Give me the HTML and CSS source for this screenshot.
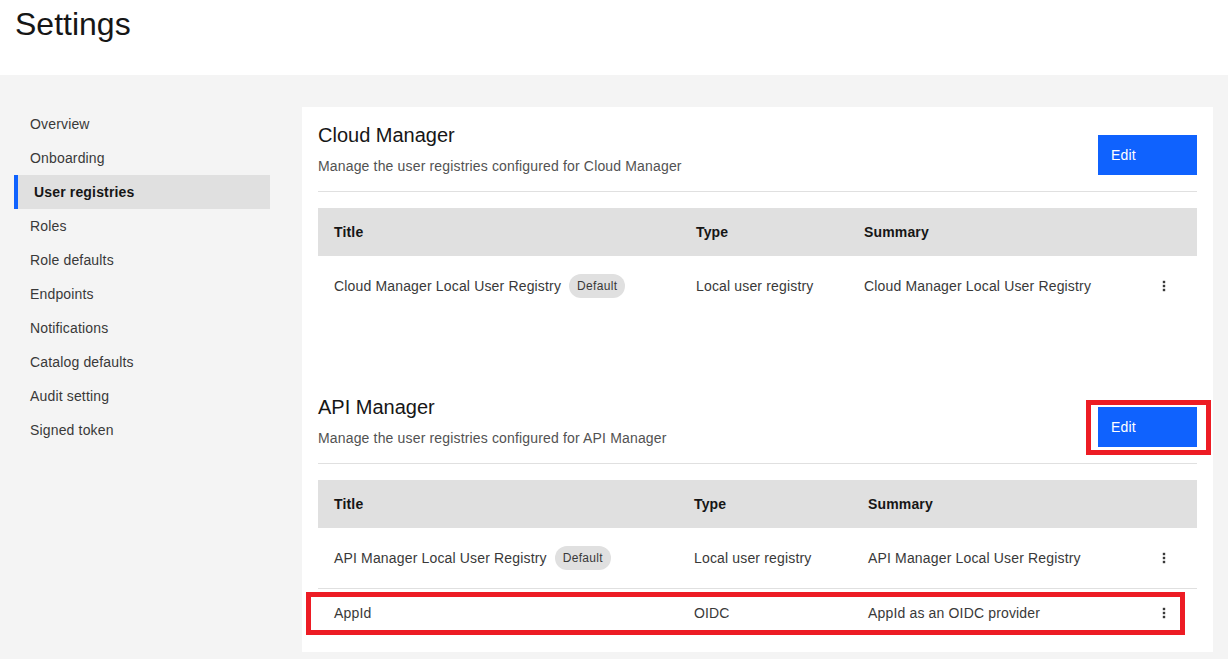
FILE: index.html
```html
<!DOCTYPE html>
<html lang="en">
<head>
<meta charset="utf-8">
<title>Settings</title>
<link rel="stylesheet" href="styles.css">
</head>
<body>
<header class="page-header">
  <h1 class="page-title">Settings</h1>
</header>
<div class="layout">
  <nav class="side-nav">
    <a class="nav-item">Overview</a>
    <a class="nav-item">Onboarding</a>
    <a class="nav-item active">User registries</a>
    <a class="nav-item">Roles</a>
    <a class="nav-item">Role defaults</a>
    <a class="nav-item">Endpoints</a>
    <a class="nav-item">Notifications</a>
    <a class="nav-item">Catalog defaults</a>
    <a class="nav-item">Audit setting</a>
    <a class="nav-item">Signed token</a>
  </nav>
  <main class="card">
    <section class="section section-cloud">
      <div class="section-head">
        <div class="section-text">
          <h2 class="section-title">Cloud Manager</h2>
          <p class="section-desc">Manage the user registries configured for Cloud Manager</p>
        </div>
        <span class="btn-wrap"><button class="btn-primary">Edit</button></span>
      </div>
      <div class="table table-cloud">
        <div class="row row-head">
          <div class="cell">Title</div>
          <div class="cell">Type</div>
          <div class="cell">Summary</div>
          <div class="cell"></div>
        </div>
        <div class="row row-tall">
          <div class="cell">Cloud Manager Local User Registry <span class="tag">Default</span></div>
          <div class="cell">Local user registry</div>
          <div class="cell">Cloud Manager Local User Registry</div>
          <div class="cell"><svg class="overflow" width="16" height="16" viewBox="0 0 16 16"><rect x="6.8" y="2.8" width="2.4" height="2.4" /><rect x="6.8" y="6.8" width="2.4" height="2.4" /><rect x="6.8" y="10.8" width="2.4" height="2.4" /></svg></div>
        </div>
      </div>
    </section>
    <section class="section section-api">
      <div class="section-head">
        <div class="section-text">
          <h2 class="section-title">API Manager</h2>
          <p class="section-desc">Manage the user registries configured for API Manager</p>
        </div>
        <span class="btn-wrap marked"><button class="btn-primary">Edit</button></span>
      </div>
      <div class="table table-api">
        <div class="row row-head">
          <div class="cell">Title</div>
          <div class="cell">Type</div>
          <div class="cell">Summary</div>
          <div class="cell"></div>
        </div>
        <div class="row row-tall row-divided">
          <div class="cell">API Manager Local User Registry <span class="tag">Default</span></div>
          <div class="cell">Local user registry</div>
          <div class="cell">API Manager Local User Registry</div>
          <div class="cell"><svg class="overflow" width="16" height="16" viewBox="0 0 16 16"><rect x="6.8" y="2.8" width="2.4" height="2.4" /><rect x="6.8" y="6.8" width="2.4" height="2.4" /><rect x="6.8" y="10.8" width="2.4" height="2.4" /></svg></div>
        </div>
        <div class="row row-marked">
          <div class="cell">AppId</div>
          <div class="cell">OIDC</div>
          <div class="cell">AppId as an OIDC provider</div>
          <div class="cell"><svg class="overflow" width="16" height="16" viewBox="0 0 16 16"><rect x="6.8" y="2.8" width="2.4" height="2.4" /><rect x="6.8" y="6.8" width="2.4" height="2.4" /><rect x="6.8" y="10.8" width="2.4" height="2.4" /></svg></div>
        </div>
      </div>
    </section>
  </main>
</div>
</body>
</html>
```

FILE: styles.css
```css
* { box-sizing: border-box; }
html, body { margin: 0; padding: 0; }
body {
  font-family: "Liberation Sans", Arial, sans-serif;
  color: #161616;
  background: #f4f4f4;
  letter-spacing: 0.16px;
}
.page-header {
  height: 75px;
  background: #ffffff;
  padding: 0 15px;
}
.page-title {
  margin: 0;
  padding-top: 4px;
  font-size: 32px;
  line-height: 40px;
  font-weight: 400;
  letter-spacing: 0;
  color: #161616;
}
.layout {
  display: flex;
  align-items: flex-start;
  padding: 32px 15px 0 14px;
  gap: 32px;
}
.side-nav {
  width: 256px;
  flex: none;
  display: flex;
  flex-direction: column;
}
.nav-item {
  display: block;
  height: 34px;
  line-height: 34px;
  padding-left: 16px;
  font-size: 14px;
  color: #393939;
}
.nav-item.active {
  background: #e0e0e0;
  border-left: 4px solid #0f62fe;
  font-weight: 700;
  color: #161616;
}
.card {
  flex: 1;
  background: #ffffff;
  padding: 14px 16px 15px;
}
.section-cloud { padding-bottom: 77px; }
.section-head {
  display: flex;
  justify-content: space-between;
  align-items: flex-end;
  padding-bottom: 15px;
  border-bottom: 1px solid #e0e0e0;
  margin-bottom: 16px;
}
.section-title {
  margin: 0;
  font-size: 20px;
  line-height: 28px;
  font-weight: 400;
  letter-spacing: 0;
  color: #161616;
}
.section-desc {
  margin: 7px 0 0;
  font-size: 14px;
  line-height: 20px;
  color: #525252;
}
.btn-wrap {
  position: relative;
  display: inline-block;
  margin-bottom: 1px;
}
.btn-wrap.marked::after {
  content: "";
  position: absolute;
  top: -7px;
  left: -12px;
  right: -14px;
  bottom: -8px;
  border: 5px solid #ed1c24;
}
.btn-primary {
  display: block;
  width: 99px;
  height: 40px;
  border: 0;
  margin: 0;
  padding: 0 0 0 13px;
  text-align: left;
  background: #0f62fe;
  color: #ffffff;
  font-family: inherit;
  font-size: 14px;
  letter-spacing: 0.16px;
}
.table { display: flex; flex-direction: column; }
.row {
  display: grid;
  align-items: center;
  font-size: 14px;
  color: #393939;
  height: 48px;
  position: relative;
}
.table-cloud .row { grid-template-columns: 362px 168px 300px 1fr; }
.table-api .row { grid-template-columns: 360px 174px 296px 1fr; }
.cell {
  padding-left: 16px;
  display: flex;
  align-items: center;
  white-space: nowrap;
}
.row-head {
  background: #e0e0e0;
  font-weight: 700;
  color: #161616;
}
.row-tall { height: 60px; }
.row-divided { border-bottom: 1px solid #e0e0e0; height: 61px; }
.row-marked::after {
  content: "";
  position: absolute;
  top: 3px;
  left: -12px;
  right: 12px;
  bottom: 2px;
  border: 5px solid #ed1c24;
}
.tag {
  display: inline-flex;
  align-items: center;
  height: 24px;
  padding: 0 8px;
  margin-left: 8px;
  border-radius: 12px;
  background: #e0e0e0;
  color: #393939;
  font-size: 12px;
  letter-spacing: 0.32px;
}
.overflow {
  display: block;
  margin-left: -8px;
  fill: #393939;
}
```
